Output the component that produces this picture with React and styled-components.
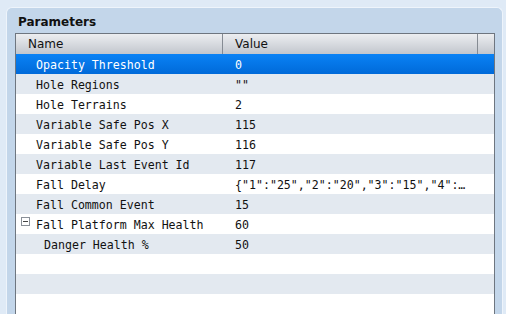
import React from 'react';
import styled, { createGlobalStyle } from 'styled-components';

const GlobalStyle = createGlobalStyle`
  html, body {
    margin: 0;
    padding: 0;
    background: #dfeaf6;
    overflow: hidden;
  }
  body {
    font-family: 'DejaVu Sans', Verdana, sans-serif;
    color: #111;
  }
`;

const Panel = styled.section`
  margin: 7px 0 0 6px;
  width: 497px;
  height: 320px;
  box-sizing: border-box;
  background: #c3d6ea;
  border: 1px solid #eef4fb;
  border-bottom: none;
  border-radius: 6px 6px 0 0;
  padding: 7px 7px 0 8px;
`;

const Title = styled.h2`
  margin: 0 0 4px 3px;
  font-size: 12px;
  font-weight: bold;
  line-height: 14px;
  color: #111;
`;

const Table = styled.div`
  border: 1px solid #6e7680;
  border-bottom: none;
  background: #fff;
  height: 300px;
`;

const HeaderRow = styled.div`
  display: flex;
  height: 20px;
  background: linear-gradient(#eceef1, #c2c6cd);
`;

const HeaderCell = styled.div`
  box-sizing: border-box;
  width: ${p => p.$w}px;
  flex: ${p => (p.$w ? 'none' : 1)};
  border-right: ${p => (p.$last ? 'none' : '1px solid #858b93')};
  padding-left: 12px;
  font-size: 12px;
  line-height: 20px;
`;

const Row = styled.div`
  display: flex;
  height: 20px;
  box-sizing: border-box;
  padding-top: 2px;
  background: ${p =>
    p.$selected
      ? 'linear-gradient(#0a82f5, #006ad9)'
      : p.$striped
      ? '#e3e9f0'
      : '#fff'};
  color: ${p => (p.$selected ? '#fff' : '#111')};
  font-family: 'DejaVu Sans Mono', 'Liberation Mono', monospace;
  font-size: 11.6px;
  line-height: 18px;
`;

const NameCell = styled.div`
  display: flex;
  align-items: flex-start;
  width: 207px;
  flex: none;
  box-sizing: border-box;
  padding-left: ${p => 5 + p.$depth * 8}px;
  white-space: nowrap;
  overflow: hidden;
`;

const Toggle = styled.span`
  width: 15px;
  flex: none;
  height: 18px;
`;

const Box = styled.span`
  position: relative;
  display: block;
  width: 7px;
  height: 7px;
  margin-top: 1px;
  border: 1px solid #8a9098;
  background: #fff;
  &::after {
    content: '';
    position: absolute;
    left: 1px;
    right: 1px;
    top: 3px;
    height: 1px;
    background: #444;
  }
`;

const ValueCell = styled.div`
  flex: 1;
  min-width: 0;
  padding: 0 8px 0 12px;
  white-space: nowrap;
  overflow: hidden;
`;

const params = [
  { name: 'Opacity Threshold', value: '0' },
  { name: 'Hole Regions', value: '""' },
  { name: 'Hole Terrains', value: '2' },
  { name: 'Variable Safe Pos X', value: '115' },
  { name: 'Variable Safe Pos Y', value: '116' },
  { name: 'Variable Last Event Id', value: '117' },
  { name: 'Fall Delay', value: '{"1":"25","2":"20","3":"15","4":…' },
  { name: 'Fall Common Event', value: '15' },
  { name: 'Fall Platform Max Health', value: '60', open: true },
  { name: 'Danger Health %', value: '50', depth: 1 },
  { name: '', value: '' },
  { name: '', value: '' },
  { name: '', value: '' },
];

export default function App() {
  return (
    <>
      <GlobalStyle />
      <Panel>
        <Title>Parameters</Title>
        <Table>
          <HeaderRow>
            <HeaderCell $w={207}>Name</HeaderCell>
            <HeaderCell $w={255}>Value</HeaderCell>
            <HeaderCell $last />
          </HeaderRow>
          {params.map((p, i) => (
            <Row key={i} $selected={i === 0} $striped={i % 2 === 1}>
              <NameCell $depth={p.depth || 0}>
                <Toggle>{p.open && <Box />}</Toggle>
                {p.name}
              </NameCell>
              <ValueCell>{p.value}</ValueCell>
            </Row>
          ))}
        </Table>
      </Panel>
    </>
  );
}
